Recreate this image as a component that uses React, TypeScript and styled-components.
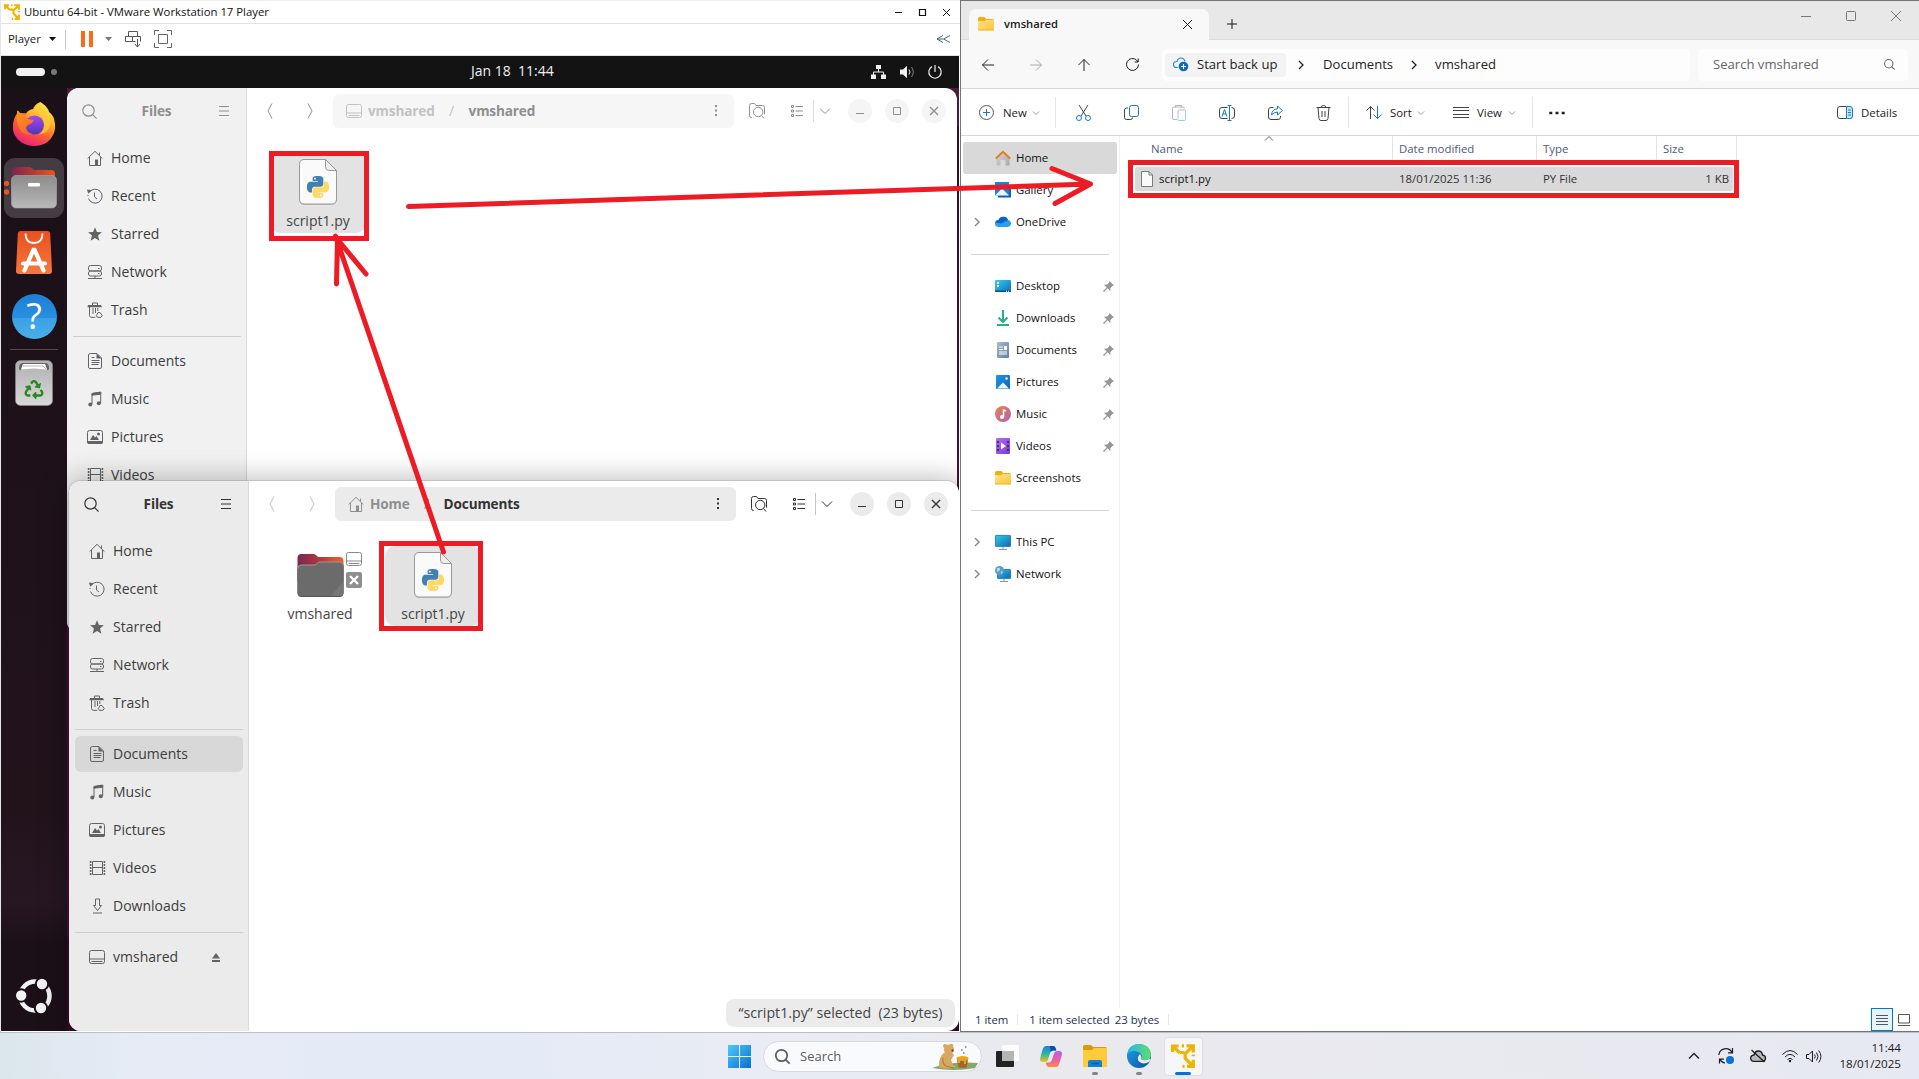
import React from "react";
import styled, { createGlobalStyle } from "styled-components";
import { FaRecycle } from "react-icons/fa";

const Global = createGlobalStyle`
  *, *::before, *::after { box-sizing: border-box; }
  html, body { margin: 0; padding: 0; overflow: hidden; background: #fff; }
  svg { display: block; flex: none; overflow: visible; }
`;

const UI = `"Open Sans", "Noto Sans", sans-serif`;
const RED = "#ed1c24";

const Desktop = styled.div`
  position: relative;
  width: 1919px;
  height: 1079px;
  display: grid;
  grid-template-columns: 960px 959px;
  grid-template-rows: 1032px 47px;
  overflow: hidden;
  font-family: ${UI};
  font-size: 11.4px;
  line-height: 1;
  white-space: pre;
  color: #1a1a1a;
`;

/* ---------- icons ---------- */

type GlyphProps = { w?: number; h?: number; box?: string; sw?: number; color?: string; children: React.ReactNode };
const Glyph = ({ w = 16, h, box, sw = 1, color = "currentColor", children }: GlyphProps) => (
  <svg width={w} height={h ?? w} viewBox={box ?? `0 0 ${w} ${h ?? w}`} fill="none" stroke={color} strokeWidth={sw}>
    {children}
  </svg>
);

const HomeG = () => (
  <Glyph><path d="M.6 8.6 8 1.3l7.4 7.3M2.5 7v8.5h11V7M12.5 5.500V2.500" /><path d="M8 9.500h3V15.500H8z" fill="currentColor" stroke="none" /></Glyph>
);
const RecentG = () => (
  <Glyph><path d="M2.200 4.400A7 7 0 1 1 1.500 10.500M7.500 4.500v4.500l2.500 2" /><path d="M0 1.500 4.800 2.200 1.200 5.800z" fill="currentColor" stroke="none" /><path d="M1 7v1" /></Glyph>
);
const StarG = () => (
  <Glyph><path d="m8 1.200 1.900 4.900 5 .2-3.900 3.300 1.400 5.200L8 11.900l-4.400 2.900L5 9.600 1.100 6.300l5-.2z" fill="currentColor" stroke="none" /></Glyph>
);
const NetworkG = () => (
  <Glyph><rect x="1.500" y="1.500" width="13" height="5.500" rx="2" /><rect x="1.500" y="7" width="13" height="5" rx="2" /><path d="M11 4.500h1.500M11 9.500h1.500M1 14.500h14M8 12v2.500" /></Glyph>
);
const TrashG = () => (
  <Glyph><path d="M5.500 3V1h5v2M2.500 5v8.500q0 1.800 1.800 1.800h4M6 6v6M8.500 6v5" /><path d="M1 3h13l1 2.200H0.500z" fill="currentColor" stroke="none" /><path d="M10.800 6v3M9.400 13.500 11 10.500h2l2.200 3-1.200 1.800h-3.700z" /></Glyph>
);
const DocG = () => (
  <Glyph><path d="M3.500.5h6.500l4.500 4.500v9q0 1.500-1.500 1.500H3q-1.500 0-1.500-1.500V2Q1.500.5 3.500.5z" /><path d="M9.500.5v5h5z" fill="currentColor" stroke="none" /><path d="M4.500 7.500h8M4.500 9.500h8M4.500 11.500h7M4.500 4.500h3" /></Glyph>
);
const MusicG = () => (
  <Glyph><path d="M5 13V2.500l8.700-1V12" /><path d="M5 2.500 13.700 1v2.200L5 4.200z" fill="currentColor" /><circle cx="3.300" cy="13.500" r="2" fill="currentColor" stroke="none" /><circle cx="11.800" cy="12.300" r="2" fill="currentColor" stroke="none" /></Glyph>
);
const PictureG = () => (
  <Glyph><rect x=".5" y="1.500" width="15" height="13" rx="2" /><path d="M.5 12.500h15v1q0 1-1 1H1.500q-1 0-1-1z" fill="currentColor" /><path d="m3 11 3-5 2 2.500L9.500 7l2.500 4z" fill="currentColor" stroke="none" /><circle cx="11.500" cy="5" r="1.500" fill="currentColor" stroke="none" /></Glyph>
);
const VideoG = () => (
  <Glyph><path d="M3.500 1.500h10v13h-10zM3.500 7.500h10" /><path d="M1.600 1v14M15.400 1v14" strokeWidth="1.600" strokeDasharray="2 1" /></Glyph>
);
const DownG = () => (
  <Glyph><path d="M6.500 1v6.500h-2L8.500 12.500l4-5h-2V1zM4 15h9" /></Glyph>
);
const DriveG = () => (
  <Glyph><rect x=".5" y="1.500" width="15" height="13" rx="2" /><path d="M1 10h14M2.500 12.500h11" /></Glyph>
);
const SearchG = ({ s = 15, sw = 1.200 }) => (
  <Glyph w={s} box="0 0 15 15" sw={sw}><circle cx="6.500" cy="6.500" r="5.700" /><path d="m10.600 10.600 4 4" /></Glyph>
);
const PinG = () => (
  <Glyph w={11}><path d="M6.500 0 11 4.300 9 5.300 7.500 7.200 7.300 9.900 4.600 7.300 1 11 0 10 3.600 6.400 1 3.800 3.800 3.500 5.700 2z" fill="#8d9aa2" stroke="none" /></Glyph>
);
const ChevronG = ({ dir = "down", w = 10, sw = 1, color }: { dir?: string; w?: number; sw?: number; color?: string }) => {
  const d: Record<string, string> = { down: "M0 2.500 5 7.500 10 2.500", up: "M0 7.500 5 2.500 10 7.500", right: "M2.500 0 7.500 5 2.500 10" };
  return <Glyph w={w} box="0 0 10 10" sw={(sw * 10) / w} color={color}><path d={d[dir]} /></Glyph>;
};
const AngleG = ({ flip = false }) => (
  <Glyph w={6} h={16}><path d={flip ? "M1 .5 5 8 1 15.500" : "M5 .5 1 8l4 7.500"} /></Glyph>
);

const VmwareLogo = ({ s = 16 }) => (
  <Glyph w={s} box="0 0 24 24" sw={3.200} color="#f0b400">
    <path d="M1.600 8V2h6M2 2.200 8.800 9M10.800 1.900H13M9 8.500h4.500M15.500 1.900h6.800V8.500M21.500 2.500l-7.300 7.300v4.500l7 7M22.300 15.800v6.600h-6.300M22.300 10.500v1.800M13.500 22.300h-2" />
  </Glyph>
);

const PY = "M14.250.180l.9.2.730.260.590.3.450.320.340.340.250.340.160.330.1.3.040.260.020.2-.010.130V8.500l-.050.630-.130.550-.210.460-.260.380-.3.310-.330.250-.350.190-.350.140-.330.1-.3.070-.260.040-.210.020H8.770l-.690.050-.590.140-.5.220-.410.270-.330.320-.270.350-.2.360-.150.370-.1.350-.070.320-.040.270-.020.210v3.060H3.170l-.210-.030-.280-.070-.320-.120-.350-.180-.360-.260-.360-.360-.350-.460-.320-.590-.280-.730-.210-.880-.140-1.050-.050-1.230.060-1.220.160-1.040.240-.870.320-.710.360-.570.4-.440.420-.330.420-.240.4-.160.360-.1.320-.050.240-.010h.160l.060.010h8.160v-.830H6.180l-.010-2.750-.020-.370.050-.340.110-.310.170-.280.250-.260.310-.230.380-.2.440-.180.510-.150.580-.120.640-.1.710-.060.770-.040.840-.020 1.270.050zm-6.300 1.980l-.230.330-.080.410.080.410.230.340.330.220.410.090.410-.090.330-.220.230-.340.080-.410-.080-.410-.230-.330-.330-.220-.410-.090-.410.090z";
const PyFile = () => (
  <svg width="38" height="47" viewBox="0 0 38 47">
    <path d="M5 1.500h22L37.500 12v29q0 5-5 5H5.500q-5 0-5-5V6q0-5 5-5z" fill="#000" opacity=".13" />
    <path d="M5 .5h21.500L37.500 11.500V40q0 5-5 5H5.500q-5 0-5-5V5.500q0-5 4.500-5z" fill="#fafafa" stroke="#999" />
    <path d="M26.500.5v7.500q0 3.500 3.500 3.500h7.500z" fill="#eee" stroke="#999" />
    <svg x="8" y="17" width="22" height="22" viewBox="0 0 24 24">
      <path d={PY} fill="#4180b4" />
      <path d={PY} fill="#ffd964" transform="rotate(180 12 12)" />
    </svg>
  </svg>
);
const UbuntuFolder = () => (
  <svg width="47" height="43" viewBox="0 0 47 43">
    <defs><linearGradient id="uf"><stop offset="0" stopColor="#772953" /><stop offset=".4" stopColor="#a83440" /><stop offset="1" stopColor="#f0602a" /></linearGradient></defs>
    <path d="M.5 4q0-4 4-4h12q2 0 3 1.500T22 3h20.500q4 0 4 4v20H.5z" fill="url(#uf)" />
    <path d="M.5 15q0-4 4-4H17q2 0 3-1.500T23 8h19.500q4 0 4 4v27q0 4-4 4h-38q-4 0-4-4z" fill="#555" />
    <path d="M.5 15q0-4 4-4H17q2 0 3-1.500T23 8h19.500q4 0 4 4v26q0 4-4 4h-38q-4 0-4-4z" fill="#6b6b6b" />
    <path d="M46.500 27v11q0 4-4 4H34z" fill="#777" />
    <path d="M.5 15q0-4 4-4H17q2 0 3-1.500T23 8h19.500q4 0 4 4" fill="none" stroke="#9a9a9a" />
  </svg>
);

const Firefox = () => (
  <svg width="44" height="46" viewBox="0 0 44 46">
    <defs>
      <linearGradient id="ff1" x1=".8" y1="0" x2=".3" y2="1"><stop offset="0" stopColor="#fff04a" /><stop offset=".35" stopColor="#ffb52c" /><stop offset=".65" stopColor="#ff5a35" /><stop offset="1" stopColor="#e81f7c" /></linearGradient>
      <linearGradient id="ff2" x1="0" y1="0" x2="0" y2="1"><stop offset="0" stopColor="#a24bf0" /><stop offset="1" stopColor="#5234b8" /></linearGradient>
      <linearGradient id="ff3" x1="0" y1="0" x2="1" y2="1"><stop offset="0" stopColor="#ff9a20" /><stop offset="1" stopColor="#ff5a2a" /></linearGradient>
    </defs>
    <path d="M28.500 1q5 3 8 8l.5 2q5 3 6 12 1 8-4.500 15T22 45Q12 45 6 38.500T1 25q0-7 4-12.500L5.500 9.500q1.500 1 2.500 2.800l6 .2Q17 8 22 8q1-5 6.500-7z" fill="url(#ff1)" />
    <circle cx="22.500" cy="24" r="9.600" fill="url(#ff2)" />
    <path d="M5.500 9.500q2 1 2.500 2.800l6 .4q-.5 3 .5 5l7.500 1.300q-1 3-4.500 4.200-3 1-3.500 3.500.5 4.800 6.500 6.300-7 2-11-2.500Q3 24 5.500 9.500z" fill="url(#ff3)" />
    <path d="M21 8q9 4 11 14 1 7-5 11.500 9-1 11-9t-4-14q0 4 1 6-6-3-7.500-15Q22 4 21 8z" fill="#ffcf3a" opacity=".75" />
  </svg>
);
const FilesApp = () => (
  <svg width="46" height="42" viewBox="0 0 46 42">
    <defs>
      <linearGradient id="fa1"><stop offset="0" stopColor="#7c2450" /><stop offset="1" stopColor="#e9541f" /></linearGradient>
      <linearGradient id="fa2" x1="0" y1="0" x2="0" y2="1"><stop offset="0" stopColor="#8b8b8b" /><stop offset="1" stopColor="#b9b9b9" /></linearGradient>
    </defs>
    <path d="M1 4q0-4 4-4h14l4 3h17q4 0 4 4v10H1z" fill="url(#fa1)" />
    <rect x=".5" y="8.500" width="45" height="32.500" rx="4.500" fill="url(#fa2)" stroke="#aaa" strokeWidth=".6" />
    <rect x="17" y="16" width="12" height="3.500" rx="1" fill="#fff" />
  </svg>
);
const AppCenter = () => (
  <svg width="36" height="43" viewBox="0 0 36 43">
    <defs><linearGradient id="ac" x1="0" y1="0" x2="0" y2="1"><stop offset="0" stopColor="#ea4f1c" /><stop offset="1" stopColor="#f5793f" /></linearGradient></defs>
    <path d="M4.500 0h27q2.500 0 2.700 2.500L36 40q0 3-3 3H3q-3 0-3-3L1.800 2.500Q2 0 4.500 0z" fill="url(#ac)" />
    <path d="M9.500 2.500q0 9.500 8.500 9.500t8.500-9.500" fill="none" stroke="#fff" strokeWidth="1.800" />
    <path d="m8.500 39.500 9.500-22 9.500 22M7 32.500h22" fill="none" stroke="#fff" strokeWidth="4.200" strokeLinecap="round" strokeLinejoin="bevel" />
  </svg>
);
const HelpDisc = styled.div`
  width: 45px; height: 45px; border-radius: 50%;
  display: grid; place-items: center;
  background: linear-gradient(#1d7fd6 0, #2990df 54%, #3ba1e6 54%, #4aaeea 100%);
  color: #fff; font: 400 36px/1 ${UI};
`;
const TrashApp = () => (
  <svg width="38" height="46" viewBox="0 0 38 46">
    <defs><linearGradient id="ta" x1="0" y1="0" x2="0" y2="1"><stop offset="0" stopColor="#b0b0b0" /><stop offset="1" stopColor="#d8d8d8" /></linearGradient></defs>
    <rect x=".5" y=".5" width="37" height="45" rx="5" fill="url(#ta)" stroke="#8a8a8a" strokeWidth=".6" />
    <path d="M4 9.500V8q0-5 4-5h22q4 0 4 5v1.500l-2 .8L30 4.500H8L6 10.300z" fill="#666" />
    <path d="M6 9.500 8 4h22l2 5.500-13-1z" fill="#fff" /><path d="M8 6h20l3 3" fill="none" stroke="#999" strokeWidth=".7" />
    <g color="#26891f"><FaRecycle x="9.500" y="20" size={19} /></g>
  </svg>
);
const UbuntuLogo = () => (
  <svg width="36" height="36" viewBox="0 0 36 36">
    <circle cx="19" cy="18" r="14.500" fill="none" stroke="#f2f2f2" strokeWidth="4.500" />
    <g fill="#f2f2f2" stroke="#1c1018" strokeWidth="2"><circle cx="5.200" cy="17.500" r="6.200" /><circle cx="26" cy="6" r="6.200" /><circle cx="25" cy="30" r="6.200" /></g>
  </svg>
);

/* ---------- VMware window ---------- */

const VmWindow = styled.section`
  display: flex; flex-direction: column;
  border-left: 1px solid #e6e6e6; border-top: 1px solid #eee;
  background: #fff;
`;
const VmTitle = styled.header`
  height: 23px; flex: none; display: flex; align-items: center;
  padding: 0 10px 0 3px; gap: 4px; color: #111; font-size: 11.350px;
  border-bottom: 1px solid #e3e3e3;
`;
const Spacer = styled.div` flex: 1; `;
const TitleControls = styled.div` display: flex; align-items: center; gap: 17px; `;
const VmToolbar = styled.div`
  height: 32px; flex: none; display: flex; align-items: center;
  padding: 0 10px 1px 7px; border-bottom: 1px solid #e3e3e3;
`;
const Gap = styled.span<{ $w: number }>` width: ${(p) => p.$w}px; flex: none; `;
const VLine = styled.span<{ $h: number; $c?: string }>`
  width: 1px; flex: none; height: ${(p) => p.$h}px; background: ${(p) => p.$c ?? "#c8c8c8"};
`;
const Guest = styled.div`
  position: relative; flex: none; width: 958px; height: 975px; overflow: hidden;
  background: linear-gradient(#4c1a3c 0, #4c1a3c 70px, #2c1024 71px, #4a1238 500px, #4b1038 880px, #380c26 882px, #380c26 100%);
`;
const TopBar = styled.div`
  height: 32px; display: grid; grid-template-columns: 455px auto 1fr; align-items: center;
  background: #131313; color: #f0f0f0; padding: 0 17px 0 15px; font-size: 14px;
`;
const Workspaces = styled.div` display: flex; align-items: center; gap: 6px; `;
const WorkPill = styled.span` width: 29px; height: 8px; border-radius: 4px; background: #f2f2f2; `;
const WorkDot = styled.span` width: 6px; height: 6px; border-radius: 3px; background: #777; `;
const BarClock = styled.span` padding-bottom: 2px; `;
const SysIcons = styled.div` display: flex; justify-content: flex-end; align-items: center; gap: 14px; `;
const Dock = styled.nav`
  width: 66px; height: 943px; display: flex; flex-direction: column; align-items: center;
  padding: 4px 0 3px; background: linear-gradient(#1a1017 0, #20121b 50%, #22131b 77%, #271723 86%, #1c1018 91%, #1c1018 100%);
`;
const DockSlot = styled.div` height: 64px; display: grid; place-items: center; `;
const DockActive = styled.div`
  width: 60px; height: 60px; border-radius: 11px; background: #453c43;
  display: grid; place-items: center;
`;
const DockRow = styled.div`
  position: relative; display: grid; place-items: center;
`;
const RunDots = styled.span`
  position: absolute; left: 0; top: 23px; width: 5px; height: 14px;
  background: radial-gradient(circle at 2.500px 2.500px, #e95420 2.400px, transparent 2.900px), radial-gradient(circle at 2.500px 11px, #e95420 2.400px, transparent 2.900px);
`;
const DockLine = styled.div` width: 48px; height: 1px; background: #54494f; margin: 1px 0; `;

const FilesWin = styled.div<{ $x: number; $y: number; $h: number; $back?: boolean }>`
  position: absolute; left: ${(p) => p.$x}px; top: ${(p) => p.$y}px; width: 890px; height: ${(p) => p.$h}px;
  display: flex; border-radius: 12px; overflow: hidden; background: #fff; font-size: 14px;
  color: ${(p) => (p.$back ? "#8f8f8f" : "#333")};
  box-shadow: ${(p) => (p.$back ? "none" : "0 0 0 1px rgba(0,0,0,.1), 0 2px 28px 4px rgba(0,0,0,.28)")};
`;
const Side = styled.aside<{ $back?: boolean }>`
  width: 180px; flex: none; border-right: 1px solid #dadada;
  background: ${(p) => (p.$back ? "#f1f1f1" : "#ebebeb")};
`;
const SideHead = styled.div`
  height: 46px; display: flex; align-items: center; justify-content: space-between; padding: 0 5px;
`;
const Bold = styled.span<{ $muted?: boolean }>`
  font-weight: 700; font-size: 13.600px; letter-spacing: -.15px; opacity: ${(p) => (p.$muted ? 0.5 : 1)};
`;
const IconBtn = styled.span<{ $w?: number; $h?: number }>`
  width: ${(p) => p.$w ?? 34}px; height: ${(p) => p.$h ?? 34}px; flex: none; display: grid; place-items: center;
`;
const Places = styled.div` display: flex; flex-direction: column; gap: 2px; padding: 6px 5px 0 6px; `;
const Place = styled.div<{ $on?: boolean }>`
  height: 36px; flex: none; display: flex; align-items: center; gap: 8px; padding: 0 23px 0 14px;
  border-radius: 6px; color: #636363; background: ${(p) => (p.$on ? "#d8d8d8" : "transparent")};
`;
const PlaceName = styled.span` color: #3d3d3d; flex: 1; padding-bottom: 1px; `;
const PlaceLine = styled.div` height: 1px; flex: none; margin: 6px 0 4px; background: #cfcfcf; `;
const Main = styled.div` flex: 1; display: flex; flex-direction: column; `;
const MainHead = styled.div` height: 46px; display: flex; align-items: center; gap: 6px; padding: 0 11px 0 6px; `;
const Faded = styled.span<{ $o: number }>` display: grid; opacity: ${(p) => p.$o}; `;
const PathBar = styled.div<{ $back?: boolean }>`
  width: 401px; height: 34px; border-radius: 6px; display: flex; align-items: center; padding: 0 16px 0 13px;
  background: ${(p) => (p.$back ? "#f6f6f6" : "#ebebeb")};
`;
const Slash = styled.span` opacity: .5; width: 34px; text-align: center; `;
const ViewToggle = styled.div` display: flex; align-items: center; `;
const Circles = styled.div` display: flex; gap: 13px; margin-left: 6px; `;
const Circle = styled.span<{ $back?: boolean }>`
  width: 24px; height: 24px; border-radius: 50%; display: grid; place-items: center;
  background: ${(p) => (p.$back ? "#f5f5f5" : "#ebebeb")};
`;
const FileGrid = styled.div` display: flex; gap: 17px; padding: 19px 0 0 23px; `;
const FileTile = styled.div<{ $on?: boolean }>`
  width: 96px; height: 80px; border-radius: 10px; display: flex; flex-direction: column; align-items: center;
  padding-top: 6px; gap: 8px; color: #444; background: ${(p) => (p.$on ? "#e3e3e3" : "transparent")};
`;
const FileArt = styled.div` position: relative; height: 47px; display: grid; place-items: center; `;
const Emblems = styled.div`
  position: absolute; left: 49px; top: -1px; display: flex; flex-direction: column; gap: 5px; color: #888;
`;
const Toast = styled.div`
  margin: auto 4px 4px auto; width: 229px; height: 28px; border-radius: 8px; background: #ebebeb;
  display: grid; place-items: center; color: #444; font-size: 14.200px;
`;

const FirstPlaces: [string, React.FC][] = [["Home", HomeG], ["Recent", RecentG], ["Starred", StarG], ["Network", NetworkG], ["Trash", TrashG]];
const UserPlaces: [string, React.FC][] = [["Documents", DocG], ["Music", MusicG], ["Pictures", PictureG], ["Videos", VideoG], ["Downloads", DownG]];

const FilesWindow = ({ x, y, h, back, path, children }: { x: number; y: number; h: number; back?: boolean; path: [React.FC, string, string]; children: React.ReactNode }) => {
  const PathIcon = path[0];
  const userPlaces = back ? UserPlaces.slice(0, 4) : UserPlaces;
  return (
    <FilesWin $x={x} $y={y} $h={h} $back={back}>
      <Side $back={back}>
        <SideHead>
          <IconBtn><SearchG /></IconBtn>
          <Bold>Files</Bold>
          <IconBtn><Glyph w={10} h={10}><path d="M0 .5h10M0 5h10M0 9.500h10" /></Glyph></IconBtn>
        </SideHead>
        <Places>
          {FirstPlaces.map(([n, I]) => <Place key={n}><I /><PlaceName>{n}</PlaceName></Place>)}
          <PlaceLine />
          {userPlaces.map(([n, I]) => <Place key={n} $on={!back && n === "Documents"}><I /><PlaceName>{n}</PlaceName></Place>)}
          {!back && <>
            <PlaceLine />
            <Place><DriveG /><PlaceName>vmshared</PlaceName>
              <Glyph w={8} h={9}><path d="M4 0 8 5.500H0zM0 7h8v2H0z" fill="currentColor" stroke="none" /></Glyph>
            </Place>
          </>}
        </Places>
      </Side>
      <Main>
        <MainHead>
          <IconBtn><Faded $o={back ? 1 : 0.3}><AngleG /></Faded></IconBtn>
          <IconBtn><Faded $o={back ? 1 : 0.3}><AngleG flip /></Faded></IconBtn>
          <PathBar $back={back}>
            <Faded $o={0.5}><PathIcon /></Faded><Gap $w={6} />
            <Bold $muted>{path[1]}</Bold><Slash>/</Slash><Bold>{path[2]}</Bold>
            <Spacer />
            <Glyph w={4} h={12}><path d="M2 0v2M2 4.500v2M2 9v2" strokeWidth="2" /></Glyph>
          </PathBar>
          <IconBtn><Glyph><path d="M3 14.500H2.500q-2 0-2-2v-10q0-2 2-2h3l1.500 2h6.500q2 0 2 2v7" /><circle cx="9.200" cy="9" r="4.700" /><path d="m12.500 12.500 2.500 3" /></Glyph></IconBtn>
          <ViewToggle>
            <IconBtn $w={33}><Glyph w={12} h={12}><path d="M.5.5h2v2h-2zM.5 5h2v2h-2zM.5 9.500h2v2h-2zM4.500 1.500H12M4.500 6H12M4.500 10.500H12" /></Glyph></IconBtn>
            <VLine $h={22} $c={back ? "#ddd" : "#c4c4c4"} />
            <IconBtn $w={22}><ChevronG /></IconBtn>
          </ViewToggle>
          <Circles>
            <Circle $back={back}><Glyph w={8} h={8}><path d="M0 6.500h8" /></Glyph></Circle>
            <Circle $back={back}><Glyph w={8} h={8}><path d="M.5.5h7v7h-7z" /></Glyph></Circle>
            <Circle $back={back}><Glyph w={8} h={8} sw={1.400}><path d="m0 0 8 8M8 0 0 8" /></Glyph></Circle>
          </Circles>
        </MainHead>
        {children}
      </Main>
    </FilesWin>
  );
};

const Vmware = () => (
  <VmWindow>
    <VmTitle>
      <VmwareLogo /><span>Ubuntu 64-bit - VMware Workstation 17 Player</span><Spacer />
      <TitleControls>
        <Glyph w={7} h={7}><path d="M0 3.500h7" /></Glyph>
        <Glyph w={7} h={7}><path d="M.5.5h6v6h-6z" strokeWidth="1.200" /></Glyph>
        <Glyph w={7} h={7}><path d="m0 0 7 7M7 0 0 7" /></Glyph>
      </TitleControls>
    </VmTitle>
    <VmToolbar>
      <span>Player</span><Gap $w={8} />
      <Glyph w={7} h={4}><path d="M0 0h7L3.500 4z" fill="#111" stroke="none" /></Glyph>
      <Gap $w={9} /><VLine $h={19} /><Gap $w={15} />
      <Glyph w={12} h={16}><path d="M0 0h4v16H0zM8 0h4v16H8z" fill="#ff6a1a" stroke="none" /></Glyph>
      <Gap $w={12} />
      <Glyph w={7} h={4}><path d="M0 0h7L3.500 4z" fill="#777" stroke="none" /></Glyph>
      <Gap $w={13} />
      <Glyph w={16} h={17} color="#555"><path d="M3.500.5h9v5h-9zM.5 5.500h7v5h-7zM7.500 5.500h8v5M7.500 10.500h3M12.500 8v8M10 13l2.500 3 2.500-3" /></Glyph>
      <Gap $w={13} />
      <Glyph w={18} h={18} color="#666"><path d="M4.500 4.500h9v9h-9zM.5 5V.5H5M13 .5h4.500V5M17.500 13v4.500H13M5 17.500H.5V13" /></Glyph>
      <Spacer />
      <Glyph w={14} h={8} color="#51616b"><path d="M7 .5 1 4l6 3.500M14 .5 7.500 4l6.500 3.500M1 4h6" /></Glyph>
    </VmToolbar>
    <Guest>
      <TopBar>
        <Workspaces><WorkPill /><WorkDot /></Workspaces>
        <BarClock>Jan 18  11:44</BarClock>
        <SysIcons>
          <Glyph w={15} h={14}><path d="M5 0h5v4H5zM0 9.500h5v4.500H0zM10 9.500h5v4.500h-5z" fill="currentColor" stroke="none" /><path d="M7.500 4v3M2.500 10V7h10v3" /></Glyph>
          <Glyph w={14} h={14}><path d="M0 4.500h3L7 .8v12.400L3 9.500H0z" fill="currentColor" stroke="none" /><path d="M9 4.500q2 2.500 0 5" /><path d="M11.500 2q3.500 5 0 10" opacity=".5" /></Glyph>
          <Glyph w={14} h={14} sw={1.200}><path d="M4 1.600a6.200 6.200 0 1 0 6 0M7 0v7" /></Glyph>
        </SysIcons>
      </TopBar>
      <Dock>
        <DockSlot><Firefox /></DockSlot>
        <DockSlot><DockRow><DockActive><FilesApp /></DockActive><RunDots /></DockRow></DockSlot>
        <DockSlot><AppCenter /></DockSlot>
        <DockSlot><HelpDisc>?</HelpDisc></DockSlot>
        <DockLine />
        <DockSlot><TrashApp /></DockSlot>
        <Spacer />
        <DockSlot><UbuntuLogo /></DockSlot>
      </Dock>
      <FilesWindow x={66} y={32} h={545} back path={[DriveG, "vmshared", "vmshared"]}>
        <FileGrid>
          <FileTile $on><FileArt><PyFile /></FileArt>script1.py</FileTile>
        </FileGrid>
      </FilesWindow>
      <FilesWindow x={68} y={425} h={550} path={[HomeG, "Home", "Documents"]}>
        <FileGrid>
          <FileTile>
            <FileArt><UbuntuFolder />
              <Emblems><DriveG /><Glyph><rect width="16" height="16" rx="2" fill="#8f8f8f" stroke="none" /><path d="m4 4 8 8M12 4l-8 8" stroke="#fff" strokeWidth="2.200" /></Glyph></Emblems>
            </FileArt>vmshared
          </FileTile>
          <FileTile $on><FileArt><PyFile /></FileArt>script1.py</FileTile>
        </FileGrid>
        <Toast>“script1.py” selected  (23 bytes)</Toast>
      </FilesWindow>
    </Guest>
  </VmWindow>
);

/* ---------- Explorer ---------- */

const Ex = styled.section`
  display: flex; flex-direction: column; border: 1px solid #747474; border-right: 0; background: #fff;
`;
const TabStrip = styled.div`
  height: 39px; flex: none; display: flex; align-items: flex-end; background: #e8e8e8; padding-left: 8px;
  border-bottom: 1px solid #dcdcdc;
`;
const Tab = styled.div`
  width: 240px; height: 31px; margin-bottom: -1px; display: flex; align-items: center; padding: 0 17px 1px 9px;
  border-radius: 7px 7px 0 0; background: #f8f8f8; font-weight: 600; font-size: 11.200px;
`;
const WinControls = styled.div`
  align-self: flex-start; display: flex; height: 29px; color: #777;
`;
const AddressRow = styled.div`
  height: 49px; flex: none; display: flex; align-items: center; background: #f8f8f8; padding: 1px 0 0 3px;
  border-bottom: 1px solid #d6d6d6; font-size: 13.100px; color: #222;
`;
const Address = styled.div`
  width: 528px; height: 32px; margin: 0 8px 0 6px; border-radius: 5px; background: #fdfdfd;
  display: flex; align-items: center; padding-left: 3px;
`;
const Chip = styled.div`
  height: 24px; width: 121px; border-radius: 4px; background: #f3f3f3; display: flex; align-items: center; gap: 8px; padding-left: 8px;
`;
const SearchBox = styled.div`
  width: 210px; height: 32px; border-radius: 5px; background: #fdfdfd; color: #666;
  display: flex; align-items: center; justify-content: space-between; padding: 0 13px 0 15px;
`;
const CmdBar = styled.div`
  height: 47px; flex: none; display: flex; align-items: center; padding-top: 1px; border-bottom: 1px solid #d6d6d6; color: #444;
`;
const CmdText = styled.span<{ $w: number; $l?: number }>`
  width: ${(p) => p.$w}px; margin-left: ${(p) => p.$l ?? 8}px; color: #1a1a1a; padding-top: 1px;
`;
const Body = styled.div` flex: 1; display: flex; min-height: 0; `;
const Nav = styled.nav` width: 159px; flex: none; padding: 6px 2px 0; border-right: 1px solid #f0f0f0; `;
const NavRow = styled.div<{ $on?: boolean }>`
  height: 32px; display: flex; align-items: center; padding-right: 3px; border-radius: 3px; color: #111;
  background: ${(p) => (p.$on ? "#d9d9d9" : "transparent")};
`;
const NavToggle = styled.span` width: 32px; padding-left: 10px; flex: none; `;
const NavName = styled.span` flex: 1; margin-left: 5px; `;
const NavGap = styled.div`
  height: 32px; display: flex; align-items: center; padding: 0 8px;
  &::before { content: ""; flex: 1; height: 1px; background: #d4d4d4; }
`;
const Listing = styled.div` flex: 1; `;
const HeadRow = styled.div`
  position: relative; display: grid; grid-template-columns: 273px 144px 120px 80px; height: 24px; color: #4c5a80;
`;
const HeadCell = styled.span<{ $l: number }>`
  padding: 1px 0 0 ${(p) => p.$l}px; display: flex; align-items: center; border-right: 1px solid #e2e2e2;
`;
const SortMark = styled.span` position: absolute; left: 145px; top: 0; `;
const FileRow = styled.div`
  display: grid; grid-template-columns: 258px 144px 120px 66px; align-items: center; width: 598px; height: 24px;
  margin: 7px 0 0 15px; padding-left: 6px; border-radius: 2px; background: #d9d9d9; color: #333;
`;
const FileName = styled.span` display: flex; align-items: center; gap: 6px; color: #111; `;
const RightCell = styled.span` text-align: right; `;
const StatusBar = styled.footer`
  height: 23px; flex: none; display: flex; align-items: center; padding: 0 4px 0 14px; color: #1c3057;
`;
const ViewBtn = styled.span<{ $on?: boolean }>`
  width: 22px; height: 23px; display: grid; place-items: center; color: #555;
  border: 1px solid ${(p) => (p.$on ? "#0078d7" : "transparent")}; background: ${(p) => (p.$on ? "#e5f3fb" : "transparent")};
`;

const WinFolder = () => (
  <svg width="16" height="14" viewBox="0 0 16 14">
    <defs><linearGradient id="wf" x1="0" y1="0" x2="1" y2="1"><stop offset="0" stopColor="#ffe28a" /><stop offset="1" stopColor="#ffc637" /></linearGradient></defs>
    <path d="M0 1.500Q0 0 1.500 0h5l1.500 2H14.500Q16 2 16 3.500V8H0z" fill="#f2ad13" />
    <path d="M0 4h6.500l1-1H16v9.500q0 .8-.8.8H.8q-.8 0-.8-.8z" fill="url(#wf)" /><path d="M0 13h16" stroke="#eba81c" strokeWidth=".8" />
  </svg>
);
const G = ({ id, a, b }: { id: string; a: string; b: string }) => (
  <defs><linearGradient id={id} x1="0" y1="0" x2="1" y2="1"><stop offset="0" stopColor={a} /><stop offset="1" stopColor={b} /></linearGradient></defs>
);
const S16 = ({ children }: { children: React.ReactNode }) => <svg width="16" height="16" viewBox="0 0 16 16">{children}</svg>;
const NavIcons: Record<string, React.ReactNode> = {
  Home: <S16><G id="nh" a="#d8d8d8" b="#a8a8a8" /><path d="M1.500 8 8 2.500 14.500 8v7.500h-4V10h-5v5.500h-4z" fill="url(#nh)" /><path d="M.8 8.500 8 1.800l7.200 6.700" fill="none" stroke="#e57a1f" strokeWidth="1.900" /></S16>,
  Gallery: <S16><path d="M3 3h13v12.500H3z" fill="#0f5ea8" /><path d="M0 0h14v13.500H0z" fill="#1684d8" /><path d="M0 13.500 7 6.500l7 7z" fill="#eaf4ff" /></S16>,
  OneDrive: <S16><path d="M4 13q-4 0-4-3.500T3.500 6Q5 2.800 8.500 2.800T13 6q3 .6 3 3.500T12.500 13z" fill="#28a0ea" /><path d="M.2 8.500Q.8 6 3.500 6 5 2.800 8.500 2.800 12 3 13 6L6 9.500z" fill="#0a62c4" /></S16>,
  Desktop: <S16><G id="nd" a="#35d0e8" b="#0f6cc0" /><rect y="2" width="16" height="12" rx="1" fill="url(#nd)" /><path d="M0 12.500h16V13q0 1-1 1H1q-1 0-1-1z" fill="#0d4f8a" /><path d="M2 4h2v2H2zM2 7h2v2H2zM11 12.700h1v1h-1zM13 12.700h1v1h-1z" fill="#fff" /></S16>,
  Downloads: <S16><path d="M8 0v12M3.500 7.500 8 12l4.500-4.500" fill="none" stroke="#25b08a" strokeWidth="2" /><path d="M2 15h12" stroke="#25b08a" strokeWidth="2" /></S16>,
  Documents: <S16><G id="nc" a="#a9bbd0" b="#5f7f9e" /><rect x="2" width="12" height="16" rx="1" fill="url(#nc)" /><path d="M4 5h4M4 7.500h4M4 10h8M4 12h8" stroke="#fff" /><path d="M9 4h3v4H9z" fill="#fff" /></S16>,
  Pictures: <S16><G id="np" a="#2196e3" b="#0b66bd" /><rect x="1" y="1" width="14" height="14" rx="1" fill="url(#np)" /><path d="M2 14.500 8 8.500l6 6z" fill="#f2f8ff" /><circle cx="11.500" cy="4.500" r="1.200" fill="#fff" /></S16>,
  Music: <S16><G id="nm" a="#f08048" b="#a864b8" /><circle cx="8" cy="8" r="8" fill="url(#nm)" /><path d="M8.500 11V4l2.500 1" fill="none" stroke="#fff" strokeWidth="1.500" /><circle cx="7" cy="11" r="2" fill="#fff" /></S16>,
  Videos: <S16><G id="nv" a="#b070ee" b="#7c3bd8" /><rect x="1" width="14" height="16" rx="1" fill="url(#nv)" /><path d="M3 3v10M13 3v10" stroke="#42207a" strokeWidth="1.800" strokeDasharray="2 2" /><path d="M6 4.500v7L11 8z" fill="#fff" /></S16>,
  Screenshots: <WinFolder />,
  "This PC": <S16><G id="nt" a="#2fd0e0" b="#1065b8" /><rect x=".4" y="1.400" width="15.200" height="11.200" rx=".8" fill="url(#nt)" stroke="#1b6f95" strokeWidth=".8" /><path d="M8 13v2.500M4 15.500h8" stroke="#8a9aa5" /></S16>,
  Network: <S16><G id="nn" a="#2fc0e0" b="#1065b8" /><rect x="2.400" y="3.400" width="13.200" height="9.200" rx=".8" fill="url(#nn)" stroke="#1b6f95" strokeWidth=".8" /><path d="M9 13v2.500M5 15.500h8" stroke="#8a9aa5" /><circle cx="4.500" cy="4.500" r="4.500" fill="#5f9cc4" /><path d="M2 2q3-1 3 1T2 6zM6 5l2 1-2 2z" fill="#b9dcea" /></S16>,
};
const NavItems: { n: string; on?: boolean; open?: boolean; pin?: boolean }[][] = [
  [{ n: "Home", on: true }, { n: "Gallery" }, { n: "OneDrive", open: true }],
  [..."Desktop,Downloads,Documents,Pictures,Music,Videos".split(",").map((n) => ({ n, pin: true })), { n: "Screenshots" }],
  [{ n: "This PC", open: true }, { n: "Network", open: true }],
];

const B = "#0f7ad1";
const Explorer = () => (
  <Ex>
    <TabStrip>
      <Tab><WinFolder /><Gap $w={10} />vmshared<Spacer /><Glyph w={9} h={9}><path d="m0 0 9 9M9 0 0 9" /></Glyph></Tab>
      <IconBtn $w={46} $h={30}><Glyph w={10} h={10}><path d="M5 0v10M0 5h10" /></Glyph></IconBtn>
      <Spacer />
      <WinControls>
        <IconBtn $w={46} $h={29}><Glyph w={10} h={10}><path d="M0 5.500h10" /></Glyph></IconBtn>
        <IconBtn $w={44} $h={29}><Glyph w={10} h={10}><rect x=".5" y=".5" width="9" height="9" rx="1" /></Glyph></IconBtn>
        <IconBtn $w={46} $h={29}><Glyph w={10} h={10}><path d="m0 0 10 10M10 0 0 10" /></Glyph></IconBtn>
      </WinControls>
    </TabStrip>
    <AddressRow>
      <IconBtn $w={48}><Glyph w={12} h={12}><path d="M12 6H.5M6 .5.5 6 6 11.500" /></Glyph></IconBtn>
      <IconBtn $w={48}><Glyph w={12} h={12} color="#aaa"><path d="M0 6h11.500M6 .5 11.500 6 6 11.500" /></Glyph></IconBtn>
      <IconBtn $w={48}><Glyph w={12} h={12}><path d="M6 12V.5M.5 6 6 .5 11.500 6" /></Glyph></IconBtn>
      <IconBtn $w={48}><Glyph w={13} h={13}><path d="M12.500 6.500a6 6 0 1 1-2-4.500l1.500 2M12.200.5V4H8.700" /></Glyph></IconBtn>
      <Address>
        <Chip>
          <Glyph w={16} h={15} color="#2a8ad4"><path d="M5 10.500H3.500Q.5 10.500.5 7.500t3.500-3Q5 1 8 1t4 3.500" strokeWidth="1.200" /><circle cx="10.500" cy="9.500" r="4.800" fill="#0f6cbd" stroke="none" /><path d="M10.500 7v5M8 9.500h5" stroke="#fff" /></Glyph>
          Start back up
        </Chip>
        <Gap $w={11} /><ChevronG dir="right" w={8} sw={1.300} /><Gap $w={18} />Documents<Gap $w={17} /><ChevronG dir="right" w={8} sw={1.300} /><Gap $w={17} />vmshared
      </Address>
      <SearchBox>Search vmshared<SearchG s={11} sw={1.400} /></SearchBox>
    </AddressRow>
    <CmdBar>
      <Gap $w={18} />
      <Glyph w={15} color="#555"><circle cx="7.500" cy="7.500" r="7" /><path d="M7.500 4v7M4 7.500h7" stroke={B} /></Glyph>
      <CmdText $w={30} $l={9}>New</CmdText><ChevronG w={6} color="#999" />
      <Gap $w={16} /><VLine $h={31} $c="#e6e6e6" /><Gap $w={3} />
      <IconBtn $w={48}><Glyph w={15} h={16}><path d="m3 0 7 11M12 0 5 11" /><circle cx="3" cy="13" r="2.500" stroke={B} /><circle cx="12" cy="13" r="2.500" stroke={B} /></Glyph></IconBtn>
      <IconBtn $w={48}><Glyph w={15} h={15}><path d="M4 3H2.500q-2 0-2 2v7.500q0 2 2 2h4q2 0 2-2" /><rect x="5.500" y=".5" width="9" height="11" rx="2" stroke={B} /></Glyph></IconBtn>
      <IconBtn $w={48}><Glyph w={14} h={16} color="#b8b8b8"><path d="M5 14.500H2q-1.500 0-1.500-1.500V3.500Q.5 2 2 2h9q1.500 0 1.500 1.500M3.500 2.500V.5h6v2" /><rect x="6" y="5" width="7.500" height="10.500" rx="1" stroke="#9fc9ec" /></Glyph></IconBtn>
      <IconBtn $w={48}><Glyph w={16} h={16}><path d="M8.500 2.500H3q-2.500 0-2.500 2.500v6Q.5 13.500 3 13.500h5.500M12.500 2.500q3 0 3 2.500v6q0 2.500-3 2.500" /><path d="M3 11.500 5.500 4.500 8 11.500M4 9h3M10.500.5v15M8.500.5h4M8.500 15.500h4" stroke={B} /></Glyph></IconBtn>
      <IconBtn $w={48}><Glyph w={15} h={15}><path d="M5.500 2.500H3Q.5 2.500.5 5v7q0 2.500 2.500 2.500h7q2.500 0 2.500-2.500v-1" /><path d="M9.500 1v2.800Q4 4 3.500 10 6 7 9.500 7v3L14.500 5.500z" stroke={B} /></Glyph></IconBtn>
      <IconBtn $w={48}><Glyph w={15} h={16}><path d="M.5 2.500h14M5 2.500q0-2 2.500-2t2.500 2M2 2.500l1 11q.2 2 2 2h5q1.800 0 2-2l1-11M6 6v6M9 6v6" /></Glyph></IconBtn>
      <Gap $w={1} /><VLine $h={31} $c="#e6e6e6" /><Gap $w={17} />
      <Glyph w={16} h={13}><path d="M4.500 13V.5M.5 4.500l4-4 4 4" /><path d="M11.500 0v12.500M7.500 8.500l4 4 4-4" stroke={B} /></Glyph>
      <CmdText $w={28}>Sort</CmdText><ChevronG w={6} color="#999" />
      <Gap $w={29} />
      <Glyph w={16} h={11}><path d="M0 .5h16M0 3.500h16M0 7.500h16M0 10.500h16" /></Glyph>
      <CmdText $w={32}>View</CmdText><ChevronG w={6} color="#999" />
      <Gap $w={17} /><VLine $h={31} $c="#e6e6e6" /><Gap $w={16} />
      <Glyph w={16} h={4}><path d="M.3 2h3M6.500 2h3M12.700 2h3" stroke="#222" strokeWidth="2.600" /></Glyph>
      <Spacer />
      <Glyph w={16} h={13}><path d="M9.500.5H3Q.5.5.5 3v7q0 2.500 2.500 2.500h6.500" /><path d="M9.500.5H13q2.500 0 2.500 2.500v7q0 2.500-2.500 2.500H9.500zM11 4h3M11 6.500h3M11 9h3" stroke={B} fill="#cfe5f7" /></Glyph>
      <CmdText $w={36}>Details</CmdText><Gap $w={22} />
    </CmdBar>
    <Body>
      <Nav>
        {NavItems.map((group, i) => (
          <React.Fragment key={i}>
            {i > 0 && <NavGap />}
            {group.map((it) => (
              <NavRow key={it.n} $on={it.on}>
                <NavToggle>{it.open && <ChevronG dir="right" w={8} sw={1.500} color="#8a8a8a" />}</NavToggle>
                {NavIcons[it.n]}<NavName>{it.n}</NavName>
                {it.pin && <PinG />}
              </NavRow>
            ))}
          </React.Fragment>
        ))}
      </Nav>
      <Listing>
        <HeadRow>
          <HeadCell $l={31}>Name</HeadCell><HeadCell $l={6}>Date modified</HeadCell><HeadCell $l={6}>Type</HeadCell><HeadCell $l={6}>Size</HeadCell>
          <SortMark><Glyph w={8} h={5} color="#666"><path d="m0 4.500 4-4 4 4" /></Glyph></SortMark>
        </HeadRow>
        <FileRow>
          <FileName><Glyph w={12} h={16} color="#7a7a7a"><path d="M.5.500H8l3.500 3.500v11.500H.5z" fill="#fafafa" /><path d="M8 .5V4h3.500" /></Glyph>script1.py</FileName>
          <span>18/01/2025 11:36</span><span>PY File</span><RightCell>1 KB</RightCell>
        </FileRow>
      </Listing>
    </Body>
    <StatusBar>
      1 item<Gap $w={9} /><VLine $h={11} $c="#e8e8e8" /><Gap $w={11} />1 item selected<Gap $w={5} />23 bytes<Gap $w={9} /><VLine $h={11} $c="#e8e8e8" />
      <Spacer />
      <ViewBtn $on><Glyph w={12} h={10}><path d="M0 .5h12M0 3.500h12M0 6.500h12M0 9.500h12" /></Glyph></ViewBtn>
      <ViewBtn><Glyph w={12} h={12}><path d="M.5.500h11v8.500H.5zM0 11.500h12" /></Glyph></ViewBtn>
    </StatusBar>
  </Ex>
);

/* ---------- Taskbar ---------- */

const Taskbar = styled.footer`
  grid-column: 1 / -1; display: flex; align-items: center; padding: 0 18px 0 717px;
  border-top: 1px solid #b9bfc8;
  background: linear-gradient(90deg, #dbe6ec 0, #e6ebf6 130px, #e4eaf6 500px, #e9ecf4 760px, #e9e9ee 1080px, #e8e9f0 1700px, #e6e9f3 1919px);
`;
const Slot = styled.div` position: relative; width: 44px; height: 46px; display: grid; place-items: center; flex: none; `;
const ActiveTile = styled.div`
  width: 39px; height: 39px; border-radius: 4px; background: #f6f7f9; border: 1px solid #dcdee3; display: grid; place-items: center;
`;
const Mark = styled.span<{ $on?: boolean }>`
  position: absolute; bottom: 4px; left: 50%; transform: translateX(-50%); height: 3px; border-radius: 2px;
  width: ${(p) => (p.$on ? 16 : 6)}px; background: ${(p) => (p.$on ? "#0a73d0" : "#868686")};
`;
const Pill = styled.div`
  width: 219px; height: 31px; margin: 0 3px 0 2px; border-radius: 16px; background: #f9fafd; border: 1px solid #d6d9df;
  display: flex; align-items: center; padding: 0 3px 0 11px; color: #5c5c5c; font-size: 13px;
`;
const TraySlot = styled.span<{ $w?: number }>` width: ${(p) => p.$w ?? 32}px; display: grid; place-items: center; color: #1d1d1d; `;
const Clock = styled.div` width: 79px; text-align: right; line-height: 16px; font-size: 11.600px; padding-bottom: 1px; `;

const Bear = () => (
  <svg width="46" height="27" viewBox="0 0 46 27">
    <path d="M0 25q20-7 46-5l-3 5q-20 4-43 0z" fill="#86a86b" />
    <g fill="#d9a860"><circle cx="13" cy="3" r="2" /><circle cx="19.500" cy="2.500" r="1.800" /><circle cx="17" cy="6.500" r="5" /><path d="M13 9Q6 14 7 24q8 3 12 0l4 1q1-2-2-3l-2-5 3-5-2-2z" /></g>
    <path d="M11 15q-1 5 3 8l8 2" fill="none" stroke="#b07f3c" strokeWidth="1.200" />
    <circle cx="20.500" cy="7.500" r="1" fill="#4a3320" />
    <path d="M25 16h11l-1 8q-4 2-9 0z" fill="#a8652f" /><ellipse cx="30.500" cy="15.500" rx="6" ry="2.500" fill="#e9a71b" /><path d="M26 17v3h2v-3M32 17v4h2v-4" fill="#e9a71b" />
    <path d="M29 7h1.500M33 4h1.500M31 10h1.500" stroke="#6a8470" strokeWidth="1.300" />
  </svg>
);
const Bar = () => (
  <Taskbar>
    <Slot>
      <svg width="23" height="23" viewBox="0 0 23 23"><G id="wl" a="#4cc8fb" b="#0a6fd0" /><path d="M0 0h11v11H0zM12 0h11v11H12zM0 12h11v11H0zM12 12h11v11H12z" fill="url(#wl)" /></svg>
    </Slot>
    <Pill><SearchG s={15} sw={1.700} /><Gap $w={10} />Search<Spacer /><Bear /></Pill>
    <Slot>
      <svg width="23" height="22" viewBox="0 0 23 22"><rect x="6" width="17" height="16" rx="1" fill="#fcfcfc" /><rect y="6" width="18" height="16" rx="1" fill="#222" /><path d="M6 6h12v10H6z" fill="#b5b5b5" /></svg>
    </Slot>
    <Slot>
      <svg width="22" height="21" viewBox="0 0 22 21">
        <defs>
          <linearGradient id="c1" x1="0" y1="0" x2="0" y2="1"><stop offset="0" stopColor="#1c7fe8" /><stop offset=".5" stopColor="#2bb8a0" /><stop offset="1" stopColor="#f0c020" /></linearGradient>
          <linearGradient id="c2" x1="0" y1="0" x2="0" y2="1"><stop offset="0" stopColor="#b060f0" /><stop offset=".6" stopColor="#f0609a" /><stop offset="1" stopColor="#ff8a40" /></linearGradient>
        </defs>
        <path d="M6 0h7q2 0 2.500 2l.8 2.500H13q-2 0-2.700 2L8 13.500Q7.300 16 5 16H3q-3 0-3-3 1-5 3-10.500Q3.800 0 6 0z" fill="url(#c1)" />
        <path d="M16 21H9q-2 0-2.500-2l-.8-2.500H9q2 0 2.700-2L14 7.500Q14.700 5 17 5h2q3 0 3 3-1 5-3 10.500-.8 2.500-3 2.500z" fill="url(#c2)" />
        <path d="M10 0h3q2 0 2.500 2l.8 2.500H13q-1.500 0-2.300 1.500z" fill="#1648b0" />
      </svg>
    </Slot>
    <Slot>
      <svg width="24" height="22" viewBox="0 0 24 22"><path d="M0 1.500Q0 0 1.500 0H8l2 2h12.500Q24 2 24 3.500V8H0z" fill="#d89b0c" /><path d="M0 5h9l2-2h13v18q0 1-1 1H1q-1 0-1-1z" fill="#ffcb3d" /><path d="M5 22v-5q0-2 2-2h10q2 0 2 2v5z" fill="#1480d0" /><path d="M8 18.500h8" stroke="#0a5a9c" strokeWidth="1.500" /></svg>
      <Mark />
    </Slot>
    <Slot>
      <svg width="24" height="24" viewBox="0 0 24 24">
        <G id="e1" a="#1fa5e8" b="#0c4f9e" /><defs><linearGradient id="e2"><stop offset="0" stopColor="#28b8e8" /><stop offset="1" stopColor="#5fdc6a" /></linearGradient></defs>
        <circle cx="12" cy="12" r="12" fill="url(#e1)" />
        <path d="M.3 10Q2 0 12 0q11 .5 12 10 0 6-6.500 6.200-4.500 0-3.500-2.700 2-2.500-1.500-5Q5 4.500.3 10z" fill="url(#e2)" />
        <path d="M14 13.500q-1 2.700 3.500 2.700 3.500 0 5-1.700l1 1.500-1.500 2q-6 3-10-.5-3-3.500 1-7.500 1.600 1.500 1 3.500z" fill="#e9ebf1" />
      </svg>
      <Mark />
    </Slot>
    <Slot><ActiveTile><VmwareLogo s={24} /></ActiveTile><Mark $on /></Slot>
    <Spacer />
    <TraySlot><ChevronG dir="up" w={10} sw={1.400} /></TraySlot>
    <TraySlot><Glyph w={16} h={16} sw={1.200}><path d="M.8 7A7 7 0 0 1 14 4.500M14.500 0v4.800H10M7 15Q3.500 14.500 2 11.500M1.500 15.500v-4.300H6" /><circle cx="12" cy="12" r="4" fill="#0a73d8" stroke="none" /></Glyph></TraySlot>
    <TraySlot><Glyph w={16} h={12} sw={1.300}><path d="M4 11.300Q.7 11.300.7 8.300T4 5q1-4 4.500-4T12.500 5q3 .3 3 3.200t-3.200 3.100z" fill="#b9b9bd" /><path d="m1.500 0 13 12" /></Glyph></TraySlot>
    <TraySlot><Glyph w={16} h={12}><path d="M.5 4.500q7.500-8 15 0M3 7q5-5.200 10 0M5.500 9.500q2.500-2.500 5 0" /><circle cx="8" cy="11" r="1.200" fill="currentColor" stroke="none" /></Glyph></TraySlot>
    <TraySlot $w={16}><Glyph w={16} h={13}><path d="M.5 4.500h2.500L6.500 1v11L3 8.500H.5zM8.500 4.500q1.500 2 0 4M10.500 2.500q3 4 0 8M12.700.5q4.500 6 0 12" /></Glyph></TraySlot>
    <Clock>11:44{"\n"}18/01/2025</Clock>
  </Taskbar>
);

/* ---------- red annotations drawn over both windows ---------- */

const Frame = styled.div<{ $x: number; $y: number; $w: number; $h: number }>`
  position: absolute; left: ${(p) => p.$x}px; top: ${(p) => p.$y}px; width: ${(p) => p.$w}px; height: ${(p) => p.$h}px;
  border: 5px solid ${RED};
`;
const Arrows = styled.svg` position: absolute; left: 0; top: 0; pointer-events: none; `;

export default function App() {
  return (
    <Desktop>
      <Global />
      <Vmware />
      <Explorer />
      <Bar />
      <Frame $x={269} $y={151} $w={100} $h={90} />
      <Frame $x={379} $y={541} $w={104} $h={90} />
      <Frame $x={1128} $y={160} $w={611} $h={38} />
      <Arrows width="1919" height="1079" fill="none" stroke={RED} strokeWidth="5" strokeLinecap="round" strokeLinejoin="round">
        <path d="M443.500 552 335.500 236M337.500 240l-1 44M338 240l28 34" />
        <path d="M408.500 206.500 1090 184M1052 168.500l38.500 15.500L1055 203.500" />
      </Arrows>
    </Desktop>
  );
}
